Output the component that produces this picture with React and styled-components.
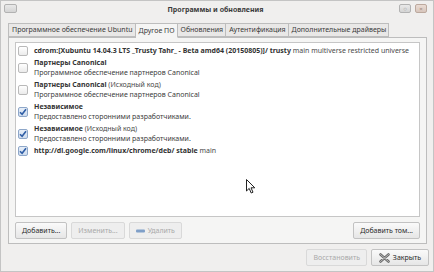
import React from 'react';
import styled, { createGlobalStyle, css } from 'styled-components';

const GlobalStyle = createGlobalStyle`
  html, body {
    margin: 0;
    padding: 0;
    background: #efeeed;
  }
  * {
    box-sizing: border-box;
  }
`;

const Window = styled.div`
  position: relative;
  width: 434px;
  height: 272px;
  display: flex;
  flex-direction: column;
  background: #f0efee;
  border: 1px solid #c4c4c4;
  font-family: 'Noto Sans', 'Open Sans', sans-serif;
  font-size: 7px;
  color: #3c3c3c;
  overflow: hidden;
`;

const TitleBar = styled.div`
  height: 19px;
  display: grid;
  grid-template-columns: 60px 1fr 60px;
  align-items: start;
  padding: 3px 6px 0 3px;
`;

const Title = styled.div`
  text-align: center;
  font-weight: 700;
  font-size: 7px;
  line-height: 12px;
  color: #3a3a3a;
`;

const WinButtons = styled.div`
  display: flex;
  gap: 4px;
  justify-content: ${(p) => (p.right ? 'flex-end' : 'flex-start')};
`;

const WinButton = styled.div`
  width: ${(p) => (p.wide ? 13 : 12)}px;
  height: 9px;
  border: 1px solid #b2b2b2;
  border-radius: 2px;
  background: linear-gradient(#e9e9e9, #d4d4d4);
  display: flex;
  align-items: center;
  justify-content: center;
  font-size: 6px;
  line-height: 1;
  color: #8a8a8a;
  ${(p) =>
    p.close &&
    css`
      background: linear-gradient(#eadcd4, #d8c6bc);
      border-color: #bca99e;
      color: #9a8478;
    `}
`;

const Body = styled.div`
  flex: 1;
  display: flex;
  flex-direction: column;
  padding: 3px 6px 5px 7px;
`;

const Tabs = styled.div`
  display: flex;
  height: 14px;
  align-items: flex-end;
`;

const Tab = styled.div`
  height: 14px;
  padding: 0 2px 0 3px;
  border: 1px solid #bdbdbd;
  border-left-width: 0;
  background: #e9e8e7;
  font-size: 7px;
  line-height: 12px;
  color: #3a3a3a;
  white-space: nowrap;
  &:first-child {
    border-left-width: 1px;
  }
  ${(p) =>
    p.active &&
    css`
      height: 15px;
      margin-bottom: -1px;
      background: #f5f5f4;
      border-bottom-color: #f5f5f4;
      position: relative;
      z-index: 1;
      line-height: 13px;
    `}
`;

const Panel = styled.div`
  height: 207px;
  display: flex;
  flex-direction: column;
  border: 1px solid #bdbdbd;
  background: #f5f5f4;
  padding: 4px 6px 4px 6px;
`;

const SourceList = styled.div`
  height: 175px;
  display: flex;
  flex-direction: column;
  gap: 2px;
  background: #ffffff;
  border: 1px solid #c6c6c6;
  padding: 3px 2px;
`;

const Item = styled.div`
  display: flex;
  align-items: center;
  gap: 6px;
`;

const Box = styled.div`
  flex: none;
  width: 10px;
  height: 10px;
  border: 1px solid #b9b9b9;
  border-radius: 2px;
  background: linear-gradient(#ffffff, #ebebeb);
  display: flex;
  align-items: center;
  justify-content: center;
  ${(p) =>
    p.checked &&
    css`
      border-color: #8ea7c9;
      background: linear-gradient(#e6eef8, #cfdcee);
    `}
`;

const Lines = styled.div`
  display: flex;
  flex-direction: column;
  line-height: 10px;
  white-space: nowrap;
`;

const Strong = styled.span`
  font-weight: 700;
  color: #333;
`;

const Muted = styled.span`
  color: #4a4a4a;
`;

const ButtonRow = styled.div`
  display: flex;
  gap: 4px;
  margin-top: 5px;
`;

const Spacer = styled.div`
  flex: 1;
`;

const Button = styled.div`
  height: 17px;
  min-width: ${(p) => p.w || 50}px;
  padding: 0 6px;
  display: flex;
  align-items: center;
  justify-content: center;
  gap: 3px;
  border: 1px solid #c2c2c2;
  border-radius: 2px;
  background: linear-gradient(#fafafa, #e6e6e6);
  font-size: 7px;
  color: #2a2a2a;
  white-space: nowrap;
  ${(p) =>
    p.disabled &&
    css`
      border-color: #d9d9d9;
      background: #eeeeee;
      color: #a9a9a9;
    `}
`;

const Footer = styled.div`
  display: flex;
  justify-content: flex-end;
  gap: 4px;
  margin-top: 5px;
  margin-right: -2px;
`;

const Cursor = styled.svg`
  position: absolute;
  left: 245px;
  top: 178px;
`;

const Check = () => (
  <svg width="8" height="8" viewBox="0 0 8 8">
    <path d="M1 4.2 L3.1 6.3 L7 1.2" fill="none" stroke="#2f5ea6" strokeWidth="1.6" />
  </svg>
);

const Minus = () => (
  <svg width="9" height="4" viewBox="0 0 9 4">
    <rect x="0" y="0.5" width="9" height="3" rx="1" fill="#7f9fc8" />
  </svg>
);

const CloseIcon = () => (
  <svg width="11" height="10" viewBox="0 0 11 10">
    <path d="M1.5 1.5 L9.5 8.5 M9.5 1.5 L1.5 8.5" stroke="#6a6a6a" strokeWidth="2.6" strokeLinecap="round" />
    <path d="M1.5 1.5 L9.5 8.5 M9.5 1.5 L1.5 8.5" stroke="#b8b8b8" strokeWidth="1" strokeLinecap="round" />
  </svg>
);

const sources = [
  {
    checked: false,
    title: 'cdrom:[Xubuntu 14.04.3 LTS _Trusty Tahr_ - Beta amd64 (20150805)]/ trusty',
    extra: ' main multiverse restricted universe',
  },
  {
    checked: false,
    title: 'Партнеры Canonical',
    sub: 'Программное обеспечение партнеров Canonical',
  },
  {
    checked: false,
    title: 'Партнеры Canonical',
    extra: ' (Исходный код)',
    sub: 'Программное обеспечение партнеров Canonical',
  },
  {
    checked: true,
    title: 'Независимое',
    sub: 'Предоставлено сторонними разработчиками.',
  },
  {
    checked: true,
    title: 'Независимое',
    extra: ' (Исходный код)',
    sub: 'Предоставлено сторонними разработчиками.',
  },
  {
    checked: true,
    title: 'http://dl.google.com/linux/chrome/deb/ stable',
    extra: ' main',
  },
];

const tabs = [
  'Программное обеспечение Ubuntu',
  'Другое ПО',
  'Обновления',
  'Аутентификация',
  'Дополнительные драйверы',
];

export default function App() {
  return (
    <>
      <GlobalStyle />
      <Window>
        <TitleBar>
          <WinButtons>
            <WinButton wide />
          </WinButtons>
          <Title>Программы и обновления</Title>
          <WinButtons right>
            <WinButton>○</WinButton>
            <WinButton close>×</WinButton>
          </WinButtons>
        </TitleBar>
        <Body>
          <Tabs>
            {tabs.map((t) => (
              <Tab key={t} active={t === 'Другое ПО'}>
                {t}
              </Tab>
            ))}
          </Tabs>
          <Panel>
            <SourceList>
              {sources.map((s, i) => (
                <Item key={i}>
                  <Box checked={s.checked}>{s.checked && <Check />}</Box>
                  <Lines>
                    <div>
                      <Strong>{s.title}</Strong>
                      {s.extra && <Muted>{s.extra}</Muted>}
                    </div>
                    {s.sub && <div>{s.sub}</div>}
                  </Lines>
                </Item>
              ))}
            </SourceList>
            <ButtonRow>
              <Button>Добавить...</Button>
              <Button disabled>Изменить...</Button>
              <Button disabled>
                <Minus />
                Удалить
              </Button>
              <Spacer />
              <Button w={66}>Добавить том...</Button>
            </ButtonRow>
          </Panel>
          <Footer>
            <Button disabled w={56}>
              Восстановить
            </Button>
            <Button w={58}>
              <CloseIcon />
              Закрыть
            </Button>
          </Footer>
        </Body>
        <Cursor width="10" height="15" viewBox="0 0 10 15">
          <path d="M0.5 0.5 L0.5 12 L3.2 9.4 L5.2 14 L7 13.2 L5 8.8 L8.8 8.8 Z" fill="#ffffff" stroke="#222" strokeWidth="1" strokeLinejoin="round" />
        </Cursor>
      </Window>
    </>
  );
}
